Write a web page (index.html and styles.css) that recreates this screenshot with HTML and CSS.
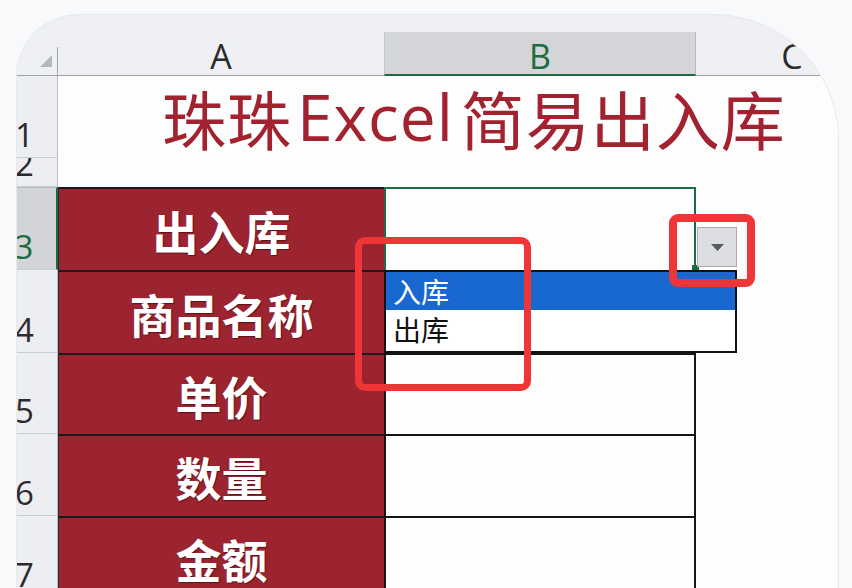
FILE: index.html
```html
<!DOCTYPE html>
<html lang="zh-CN">
<head>
<meta charset="utf-8">
<title>珠珠Excel简易出入库</title>
<link rel="stylesheet" href="styles.css">
</head>
<body>
<div class="window">
  <div class="sheet">
    <!-- column headers -->
    <div class="corner">
      <svg class="select-all" width="12" height="12" viewBox="0 0 12 12"><polygon points="12,0 12,12 0,12"/></svg>
    </div>
    <div class="col-head">A</div>
    <div class="col-head is-active">B</div>
    <div class="col-head">C</div>

    <!-- row 1: title -->
    <div class="row-head">1</div>
    <div class="cell title-cell">珠珠<span class="latin">Excel</span>简易出入库</div>

    <!-- row 2: spacer -->
    <div class="row-head">2</div>
    <div class="cell span-all"></div>

    <!-- rows 3-7: form -->
    <div class="row-head is-active">3</div>
    <div class="cell label">出入库</div>
    <div class="cell input is-selected"></div>
    <div class="cell"></div>

    <div class="row-head">4</div>
    <div class="cell label">商品名称</div>
    <div class="cell input"></div>
    <div class="cell"></div>

    <div class="row-head">5</div>
    <div class="cell label">单价</div>
    <div class="cell input"></div>
    <div class="cell"></div>

    <div class="row-head">6</div>
    <div class="cell label">数量</div>
    <div class="cell input"></div>
    <div class="cell"></div>

    <div class="row-head">7</div>
    <div class="cell label">金额</div>
    <div class="cell input"></div>
    <div class="cell"></div>

    <!-- validation dropdown on B3 -->
    <div class="fill-handle"></div>
    <div class="dd-button">
      <svg width="13" height="7" viewBox="0 0 13 7"><polygon points="0,0 13,0 6.5,7"/></svg>
    </div>
    <ul class="dd-list">
      <li class="is-hover">入库</li>
      <li>出库</li>
    </ul>

    <!-- callout outlines -->
    <div class="mark mark-list"></div>
    <div class="mark mark-button"></div>
  </div>
</div>
</body>
</html>
```

FILE: styles.css
```css
* {
  box-sizing: border-box;
  margin: 0;
  padding: 0;
}

html,
body {
  width: 852px;
  height: 588px;
  overflow: hidden;
}

body {
  background: #f8f9fb;
  padding: 15px 0 0 17px;
  font-family: "Noto Sans CJK SC", sans-serif;
}

/* rounded window holding the worksheet */
.window {
  width: 821px;
  height: 600px;
  background: #eef0f3;
  border-radius: 62px 125px 0 0;
  overflow: hidden;
  padding-top: 17px;
  box-shadow: 0 0 0 1px #e6e9ed;
}

.sheet {
  position: relative;
  margin-left: -25px;
  width: 896px;
  display: grid;
  grid-template-columns: 66px 326px 312px 192px;
  grid-template-rows: 44px 82px 29px 83px 83px 81px 82px 82px;
}

/* headers */
.corner {
  display: flex;
  justify-content: flex-end;
  align-items: flex-end;
  padding: 0 6px 8px 0;
  border-bottom: 1px solid #9da1a6;
  background: linear-gradient(#a4a8ad, #a4a8ad) right bottom / 1px 28px no-repeat, #eef0f3;
}

.select-all polygon {
  fill: #b4b8bd;
}

.col-head {
  display: flex;
  justify-content: center;
  align-items: flex-end;
  padding-bottom: 2px;
  font-family: "Open Sans", "Noto Sans", sans-serif;
  font-size: 34px;
  line-height: 1;
  color: #2b2b2b;
  border-bottom: 1px solid #9da1a6;
}

.col-head.is-active {
  background: #d3d5d8;
  color: #1e6b41;
  border-bottom: 2px solid #1e6b41;
  border-left: 1px solid #c2c5c9;
  border-right: 1px solid #b7babe;
  padding-bottom: 1px;
}

.row-head {
  display: flex;
  justify-content: center;
  align-items: flex-end;
  padding-bottom: 6px;
  overflow: hidden;
  font-family: "Open Sans", "Noto Sans", sans-serif;
  font-size: 33px;
  line-height: 1;
  color: #2b2b2b;
  background: #eceef1;
  border-right: 1px solid #b9bdc1;
  border-bottom: 1px solid #c9ccd0;
}

.row-head.is-active {
  background: #d2d4d7;
  color: #1e6b41;
  border-right: 2px solid #1e6b41;
  border-top: 1px solid #b9bcc0;
}

/* cells */
.cell {
  background: #fdfdfe;
}

.span-all {
  grid-column: 2 / 5;
}

.title-cell {
  grid-column: 2 / 5;
  display: flex;
  align-items: center;
  padding-left: 104px;
  white-space: nowrap;
  font-size: 64px;
  font-weight: 400;
  line-height: 1;
  letter-spacing: 1px;
  color: #a3222f;
}

.title-cell .latin {
  font-family: "Open Sans", "Noto Sans", sans-serif;
  margin: 0 7px 0 5px;
}

.label {
  display: flex;
  justify-content: center;
  align-items: center;
  background: #9b2430;
  color: #fff;
  font-size: 46px;
  font-weight: 700;
  line-height: 1;
  text-shadow: 1px 1px 1px rgba(45, 0, 6, 0.55);
  border-top: 2px solid #1a1a1a;
  border-left: 1px solid #2a2a2a;
}

.input {
  border-top: 2px solid #151515;
  border-left: 2px solid #151515;
  border-right: 2px solid #151515;
}

.input.is-selected {
  border-color: #1e6b41;
}

/* data-validation dropdown */
.fill-handle {
  position: absolute;
  left: 700px;
  top: 233px;
  width: 7px;
  height: 5px;
  background: #1e6b41;
}

.dd-button {
  position: absolute;
  left: 705px;
  top: 195px;
  width: 40px;
  height: 40px;
  display: flex;
  justify-content: center;
  align-items: center;
  background: #dcdee2;
  border: 1px solid #a9adb2;
}

.dd-button polygon {
  fill: #555a60;
}

.dd-list {
  position: absolute;
  left: 392px;
  top: 238px;
  width: 353px;
  height: 83px;
  list-style: none;
  display: flex;
  flex-direction: column;
  background: #fff;
  border: 2px solid #111;
}

.dd-list li {
  height: 39px;
  padding-left: 7px;
  font-size: 28px;
  line-height: 38px;
  color: #111;
}

.dd-list li.is-hover {
  height: 38px;
  background: #1868d0;
  color: #fff;
}

/* red callout outlines */
.mark {
  position: absolute;
  border: 7px solid #ef3535;
  border-radius: 10px;
}

.mark-list {
  left: 363px;
  top: 205px;
  width: 176px;
  height: 154px;
}

.mark-button {
  left: 677px;
  top: 182px;
  width: 86px;
  height: 73px;
  border-width: 8px;
  border-radius: 9px;
}
```
